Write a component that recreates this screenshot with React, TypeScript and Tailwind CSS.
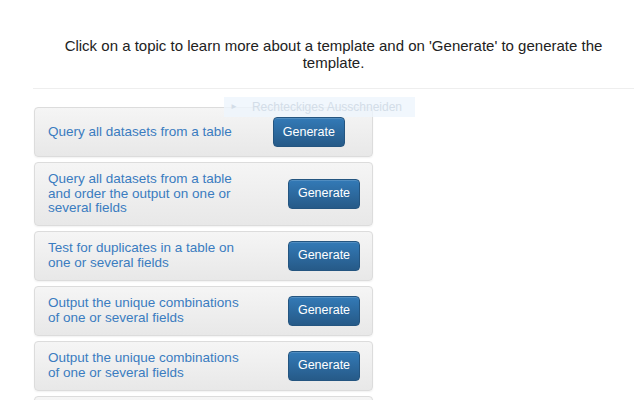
import React from 'react';

// ===============================================
// DATA
// ===============================================

const templates: string[] = [
  'Query all datasets from a table',
  'Query all datasets from a table and order the output on one or several fields',
  'Test for duplicates in a table on one or several fields',
  'Output the unique combinations of one or several fields',
  'Output the unique combinations of one or several fields',
  'Join two tables on one or several fields',
];

// ===============================================
// TEMPLATE CARD
// ===============================================

function TemplateCard({ title }: { title: string }) {
  return (
    <div className="flex items-center rounded-[4px] border border-[#dcdcdc] bg-gradient-to-b from-[#f5f5f5] to-[#e8e8e8] py-[9px] pl-[13px] shadow-[0_1px_2px_rgba(0,0,0,0.06)]">
      <span className="max-w-[199px] cursor-pointer text-[13.5px] leading-[14.5px] text-[#3a7cc0]">
        {title}
      </span>
      <button className="ml-[41px] h-[30px] w-[72px] shrink-0 rounded-[4px] border border-[#245580] bg-gradient-to-b from-[#337ab7] to-[#265a88] text-[12.5px] text-white shadow-[inset_0_1px_0_rgba(255,255,255,0.15)]">
        Generate
      </button>
    </div>
  );
}

// ===============================================
// MAIN
// ===============================================

export default function App() {
  return (
    <div
      className="relative h-[400px] w-[640px] overflow-hidden bg-white"
      style={{ fontFamily: '"Liberation Sans", Arial, sans-serif' }}
    >
      <div className="ml-[33px] w-[601px]">
        <p className="pt-[37px] text-center text-[15px] leading-[17px] text-[#222]">
          Click on a topic to learn more about a template and on 'Generate' to generate the
          <br />
          template.
        </p>
        <div className="mt-[17px] h-px bg-[#eeeeee]" />
      </div>

      {/* list of templates */}
      <div className="ml-[34px] mt-[18px] flex w-[339px] flex-col gap-[5px]">
        {templates.map((t, i) => (
          <TemplateCard key={i} title={t} />
        ))}
      </div>

      {/* faint tooltip left over in the screenshot */}
      <div className="absolute left-[224px] top-[97px] flex h-[20px] w-[191px] items-center gap-[14px] bg-[#eef5fc]/80 pl-[6px] text-[12px] text-[#d3dde8]">
        <span className="text-[8px]">►</span>
        <span>Rechteckiges Ausschneiden</span>
      </div>
    </div>
  );
}
